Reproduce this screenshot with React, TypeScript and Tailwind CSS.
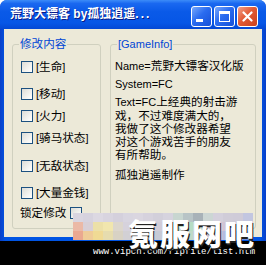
import React from "react";

const cjk = "font-['Liberation_Sans','Noto_Sans_CJK_SC',sans-serif]";

const options = [
  { label: "生命", mt: "mt-[10px]" },
  { label: "移动", mt: "mt-[15px]" },
  { label: "火力", mt: "mt-[10px]" },
  { label: "骑马状态", mt: "mt-[10px]" },
  { label: "无敌状态", mt: "mt-[16px]" },
  { label: "大量金钱", mt: "mt-[15px]" },
];

// pixelated strip from the watermark, 18 x 3 blocks
const blocks = [
  "bg-[#d9d5e0]", "bg-[#d6d2de]", "bg-[#dcd8e2]", "bg-[#d8d4df]", "bg-[#d4d0dc]", "bg-[#d8d5e0]", "bg-[#dad6e0]", "bg-[#d6d2dd]", "bg-[#d2cfda]",
  "bg-[#d6d3de]", "bg-[#c8d6d0]", "bg-[#b8c4c6]", "bg-[#a8b2b8]", "bg-[#ccd6d4]", "bg-[#d4d0dc]", "bg-[#d0ccd8]", "bg-[#cfcbd8]", "bg-[#c2c6e0]",
  "bg-[#ebb9a6]", "bg-[#d8cfd6]", "bg-[#ece0a8]", "bg-[#f1e6ae]", "bg-[#dcd6cc]", "bg-[#d6d2dc]", "bg-[#cfd4d6]", "bg-[#d2d0da]", "bg-[#d0ccd8]",
  "bg-[#c8d2d2]", "bg-[#bedcc8]", "bg-[#b6dcc4]", "bg-[#c6dacd]", "bg-[#d8c8d2]", "bg-[#d6c6d4]", "bg-[#cfc4d6]", "bg-[#c8c6dc]", "bg-[#a6b6e6]",
  "bg-[#eaa890]", "bg-[#efcc98]", "bg-[#f0da94]", "bg-[#e6dcae]", "bg-[#d8d2c4]", "bg-[#d2d0d4]", "bg-[#ccd0d2]", "bg-[#c8cdd6]", "bg-[#c6cad6]",
  "bg-[#bcd2cc]", "bg-[#b2d8c0]", "bg-[#c0d8c8]", "bg-[#c4ccd6]", "bg-[#c8c0d4]", "bg-[#c2bed6]", "bg-[#b4bce0]", "bg-[#98aee8]", "bg-[#6c90e8]",
];

function CheckBox() {
  return (
    <span className="block h-[12px] w-[12px] shrink-0 border border-[#1c5180] bg-[linear-gradient(135deg,#dcdcd6,#f6f6f3_70%,#ffffff)]" />
  );
}

function TitleButton({ kind }: { kind: "min" | "max" | "close" }) {
  const base =
    kind === "close"
      ? "bg-[linear-gradient(135deg,#f3a089,#e25a35_45%,#c8401c)]"
      : "bg-[linear-gradient(135deg,#78a8fc,#2a6cf0_45%,#1650d8)]";
  return (
    <div
      className={`relative h-[21px] w-[21px] rounded-[3px] border border-white ${base}`}
    >
      {kind === "min" && (
        <span className="absolute left-[4px] top-[12px] h-[3px] w-[7px] bg-white" />
      )}
      {kind === "max" && (
        <span className="absolute left-[4px] top-[4px] h-[11px] w-[11px] border border-t-[3px] border-white" />
      )}
      {kind === "close" && (
        <svg className="absolute left-[4px] top-[4px]" width="11" height="11" viewBox="0 0 11 11">
          <path d="M1.5 1.5 L9.5 9.5 M9.5 1.5 L1.5 9.5" stroke="white" strokeWidth="2.2" strokeLinecap="round" />
        </svg>
      )}
    </div>
  );
}

export default function App() {
  return (
    <div className={`relative h-[265px] w-[266px] overflow-hidden bg-white ${cjk}`}>
      {/* Window */}
      <div className="flex h-[241px] w-[266px] flex-col rounded-t-[7px] bg-[linear-gradient(to_right,#0a3fc8,#0054e3_2%,#0054e3_98%,#0a3fc8)]">
        {/* Title bar */}
        <div className="flex h-[29px] items-start justify-between rounded-t-[7px] bg-[linear-gradient(to_bottom,#3c8cf8,#1a68f0_12%,#0a5ae8_40%,#0656e6_80%,#0448d4)] pl-[10px] pr-[8px]">
          <span className="mt-[6px] whitespace-nowrap text-[12px] font-bold leading-[17px] text-white [text-shadow:1px_1px_#0a1883]">
            荒野大镖客 by孤独逍遥<span className="tracking-[2px]">...</span>
          </span>
          <div className="mt-[6px] flex shrink-0 gap-[2px]">
            <TitleButton kind="min" />
            <TitleButton kind="max" />
            <TitleButton kind="close" />
          </div>
        </div>

        {/* Client area */}
        <div className="mx-[4px] mb-[4px] flex flex-1 gap-[9px] bg-[#ece9d8] pl-[8px] pt-[8px] text-black">
          {/* 修改内容 */}
          <fieldset className="h-[192px] w-[89px] rounded-[3px] border border-[#d0d0bf] p-0">
            <legend className="ml-[6px] px-[1px] text-[11.6px] leading-[14px] text-[#0046d5]">
              修改内容
            </legend>
            <div className="flex flex-col pl-[8px]">
              {options.map((o) => (
                <div key={o.label} className={`flex h-[12px] items-center ${o.mt}`}>
                  <CheckBox />
                  <span className="ml-[3px] text-[11.6px] leading-[12px]">
                    <span className="text-[11px]">[</span>
                    {o.label}
                    <span className="text-[11px]">]</span>
                  </span>
                </div>
              ))}
              <div className="ml-[-1px] mt-[8px] flex h-[12px] items-center gap-[4px]">
                <span className="text-[11.6px] leading-[12px]">锁定修改</span>
                <CheckBox />
              </div>
            </div>
          </fieldset>

          {/* GameInfo */}
          <fieldset className="h-[192px] w-[146px] rounded-[3px] border border-[#d0d0bf] p-0">
            <legend className="ml-[6px] px-[1px] text-[11px] leading-[14px] text-[#0046d5]">
              [GameInfo]
            </legend>
            <div className="flex flex-col pl-[4px] pt-[8px] text-[11.6px] leading-[13px]">
              <div>
                <span className="text-[11px]">Name=</span>荒野大镖客汉化版
              </div>
              <div className="mt-[5px] text-[11px]">System=FC</div>
              <div className="mt-[4px]">
                <span className="text-[11px]">Text=FC</span>上经典的射击游
                <br />
                戏，不过难度满大的，
                <br />
                我做了这个修改器希望
                <br />
                对这个游戏苦手的朋友
                <br />
                有所帮助。
              </div>
              <div className="mt-[7px]">孤独逍遥制作</div>
            </div>
          </fieldset>
        </div>
      </div>

      {/* Black strip under the window */}
      <div className="h-[24px] bg-black pl-[93px] pt-[5px] font-['Liberation_Mono',monospace] text-[9px] leading-[12px] text-white">
        www.vipcn.com/ripfile/list.htm
      </div>

      {/* Watermark */}
      <div className="absolute left-[73px] top-[213px] grid grid-cols-[repeat(18,10px)] grid-rows-[repeat(3,9px)]">
        {blocks.map((c, i) => (
          <span key={i} className={c} />
        ))}
      </div>
      <div className="absolute left-[128px] top-[216px] font-['Noto_Sans_CJK_SC',sans-serif] text-[30px] font-black leading-[32px] tracking-[2px] text-white [text-shadow:1px_2px_0_#222]">
        氪服网吧
      </div>
    </div>
  );
}
